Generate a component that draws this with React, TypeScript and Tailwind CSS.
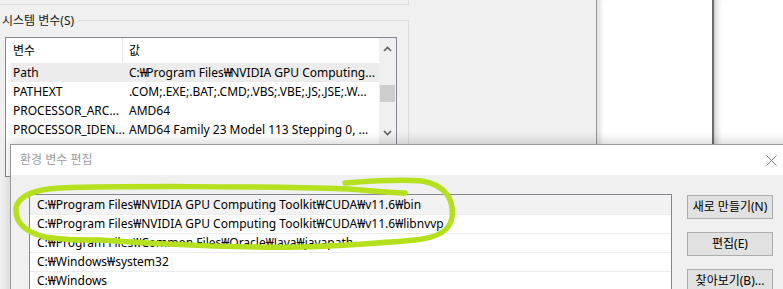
import React from "react";

const font = "font-['Noto_Sans','Noto_Sans_CJK_KR',sans-serif]";

const sysVars = [
  { name: "Path", value: "C:₩Program Files₩NVIDIA GPU Computing...", selected: true },
  { name: "PATHEXT", value: ".COM;.EXE;.BAT;.CMD;.VBS;.VBE;.JS;.JSE;.W..." },
  { name: "PROCESSOR_ARC...", value: "AMD64" },
  { name: "PROCESSOR_IDEN...", value: "AMD64 Family 23 Model 113 Stepping 0, ..." },
];

const paths = [
  "C:₩Program Files₩NVIDIA GPU Computing Toolkit₩CUDA₩v11.6₩bin",
  "C:₩Program Files₩NVIDIA GPU Computing Toolkit₩CUDA₩v11.6₩libnvvp",
  "C:₩Program Files₩Common Files₩Oracle₩Java₩javapath",
  "C:₩Windows₩system32",
  "C:₩Windows",
];

// the won sign is narrower in the old list view font
function Won({ text }: { text: string }) {
  const parts = text.split("₩");
  return (
    <>
      {parts.map((p, i) => (
        <React.Fragment key={i}>
          {i > 0 && <span className="tracking-[-1.5px]">₩</span>}
          {p}
        </React.Fragment>
      ))}
    </>
  );
}

function Chevron({ up }: { up?: boolean }) {
  return (
    <svg width="9" height="6" viewBox="0 0 9 6" className="block">
      <path
        d={up ? "M1 5 L4.5 1.5 L8 5" : "M1 1 L4.5 4.5 L8 1"}
        fill="none"
        stroke="#606060"
        strokeWidth="1.6"
      />
    </svg>
  );
}

export default function App() {
  return (
    <div className={`relative w-[783px] h-[289px] overflow-hidden bg-[#f0f0f0] text-[12px] text-black ${font}`}>
      {/* background: environment variables window */}
      <div className="flex h-full">
        <div className="w-[596px] shrink-0">
          <div className="w-[409px] h-[5px] border-b border-r border-[#dcdcdc]" />
          <div className="mt-[8px] flex w-[409px] h-[16px]">
            <span className="pl-[2px] leading-[16px] text-[#1a1a1a]">시스템 변수(S)</span>
            <div className="flex-1 self-end h-[9px] ml-[4px] border-t border-r border-[#dcdcdc]" />
          </div>
          <div className="w-[409px] h-full border-r border-[#dcdcdc] pl-[5px] pt-[8px]">
            <div className="w-[392px] h-[140px] border border-[#828790] bg-white flex">
              <div className="w-[373px]">
                <div className="flex h-[25px] items-center">
                  <div className="w-[117px] h-full pl-[7px] flex items-center border-r border-[#e5e5e5]">변수</div>
                  <div className="pl-[6px]">값</div>
                </div>
                {sysVars.map((v) => (
                  <div
                    key={v.name}
                    className={`ml-[5px] flex h-[19px] items-center whitespace-nowrap ${v.selected ? "bg-[#ececec]" : ""}`}
                  >
                    <div className="w-[118px] pl-[2px] overflow-hidden">{v.name}</div>
                    <div className="overflow-hidden">
                      <Won text={v.value} />
                    </div>
                  </div>
                ))}
              </div>
              <div className="w-[17px] bg-[#f0f0f0] flex flex-col items-center">
                <div className="h-[22px] flex items-center">
                  <Chevron up />
                </div>
                <div className="mt-[25px] w-[15px] h-[17px] bg-[#cdcdcd]" />
                <div className="mt-[28px]">
                  <Chevron />
                </div>
              </div>
            </div>
          </div>
        </div>
        <div className="w-[116px] shrink-0 border-l border-[#9a9a9a] bg-white shadow-[inset_7px_0_6px_-5px_rgba(0,0,0,0.18)]" />
        <div className="w-[2px] shrink-0 bg-[#6e6e6e]" />
        <div className="flex-1 border-l border-[#cfcfcf] bg-white shadow-[inset_7px_0_6px_-5px_rgba(0,0,0,0.18)]" />
      </div>

      {/* front dialog: 환경 변수 편집 */}
      <div className="absolute left-[10px] top-[144px] w-[790px] h-[160px] border border-[#9a9a9a] bg-[#f0f0f0] shadow-[0_-3px_10px_rgba(0,0,0,0.16)]">
        <div className="h-[30px] bg-white flex items-center justify-between pl-[9px] pr-[22px]">
          <span className="text-[#9c9c9c]">환경 변수 편집</span>
          <svg width="11" height="11" viewBox="0 0 11 11">
            <path d="M0.5 0.5 L10.5 10.5 M10.5 0.5 L0.5 10.5" stroke="#7a7a7a" strokeWidth="1" />
          </svg>
        </div>
        <div className="flex pl-[18px] pt-[19px]">
          <div className="w-[643px] h-[120px] border border-[#828790] bg-white">
            {paths.map((p, i) => (
              <div
                key={p}
                className={`h-[19px] pl-[7px] flex items-center whitespace-nowrap ${i === 0 ? "bg-[#f2f2f2]" : "border-t border-[#ececec]"}`}
              >
                {p}
              </div>
            ))}
          </div>
          <div className="ml-[15px] mt-[1px] flex flex-col gap-[13px]">
            {["새로 만들기(N)", "편집(E)", "찾아보기(B)..."].map((b) => (
              <div
                key={b}
                className="w-[86px] h-[24px] border border-[#adadad] bg-[#e1e1e1] flex items-center justify-center whitespace-nowrap"
              >
                {b}
              </div>
            ))}
          </div>
        </div>
      </div>

      {/* hand-drawn highlight */}
      <svg className="absolute inset-0 pointer-events-none" width="783" height="289" viewBox="0 0 783 289">
        <path
          d="M405 193 C390 193 372 191 350 189 C250 186 120 186 60 188 C35 189 18 196 16 208 C15 222 25 232 45 237 C70 241 90 240 100 240 C180 246 260 248 300 247 C340 246 380 243 415 240 C436 238 450 232 452 217 C454 200 446 185 422 181 C397 179 372 181 345 183"
          fill="none"
          stroke="#b4e01e"
          strokeWidth="5.5"
          strokeLinecap="round"
          strokeLinejoin="round"
        />
      </svg>
    </div>
  );
}
